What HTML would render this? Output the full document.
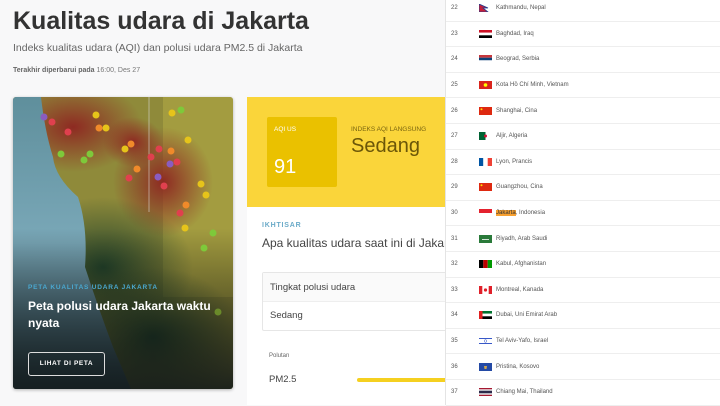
<!DOCTYPE html>
<html><head><meta charset="utf-8"><style>
*{margin:0;padding:0;box-sizing:border-box}
body{width:720px;height:405px;overflow:hidden;background:#f8f8f9;font-family:"Liberation Sans",sans-serif;position:relative}
.h1{position:absolute;left:13px;top:7px;font-size:25px;font-weight:bold;color:#333}
.sub{position:absolute;left:13px;top:42px;font-size:10.5px;color:#666}
.upd{position:absolute;left:13px;top:67px;font-size:7px;color:#777}
.upd b{color:#666}
.map{position:absolute;left:13px;top:97px;width:220px;height:292px;border-radius:3px;overflow:hidden;box-shadow:0 1px 3px rgba(0,0,0,.3)}
.yc{position:absolute;left:247px;top:97px;width:198px;height:110px;background:#fad53a}
.aqi{position:absolute;left:267px;top:117px;width:70px;height:70px;background:#eac100;border-radius:2px;color:#fff}
.wc{position:absolute;left:247px;top:207px;width:198px;height:198px;background:#fff}
.rp{position:absolute;left:445px;top:0;width:275px;height:405px;background:#fff;border-left:1px solid #e4e4e4}
.row{position:absolute;left:0;width:275px;height:25.6px;border-bottom:1px solid #eee;font-size:6px;color:#555}
.row .n{position:absolute;left:5px;top:50%;transform:translateY(-50%)}
.row .f{position:absolute;left:33px;top:50%;margin-top:-4px;width:13px;height:8px}
.row .t{position:absolute;left:50px;top:50%;transform:translateY(-50%)}
</style></head><body>
<div class="h1">Kualitas udara di Jakarta</div>
<div class="sub">Indeks kualitas udara (AQI) dan polusi udara PM2.5 di Jakarta</div>
<div class="upd"><b>Terakhir diperbarui pada</b> 16:00, Des 27</div>

<div class="map">
<svg width="220" height="292" viewBox="0 0 220 292">
<defs>
<radialGradient id="r1" cx="0.5" cy="0.5" r="0.5"><stop offset="0" stop-color="#8e2a22"/><stop offset="1" stop-color="#8e2a22" stop-opacity="0"/></radialGradient>
<radialGradient id="g1" cx="0.5" cy="0.5" r="0.5"><stop offset="0" stop-color="#24452c"/><stop offset="1" stop-color="#24452c" stop-opacity="0"/></radialGradient>
<linearGradient id="dk" x1="0" y1="0" x2="0" y2="1"><stop offset="0.45" stop-color="#000" stop-opacity="0"/><stop offset="1" stop-color="#111819" stop-opacity="0.9"/></linearGradient>
<linearGradient id="wt" x1="0" y1="0" x2="0" y2="1"><stop offset="0" stop-color="#5f8f9c"/><stop offset="0.5" stop-color="#7aa8b8"/><stop offset="1" stop-color="#3c5a66"/></linearGradient>
</defs>
<rect width="220" height="292" fill="#8f8a3a"/>
<rect x="150" y="0" width="70" height="200" fill="#b0a845" opacity=".6"/>
<ellipse cx="60" cy="30" rx="70" ry="45" fill="url(#r1)"/>
<ellipse cx="150" cy="85" rx="50" ry="55" fill="url(#r1)"/>
<ellipse cx="120" cy="45" rx="30" ry="25" fill="url(#r1)"/>
<ellipse cx="90" cy="170" rx="90" ry="70" fill="url(#g1)"/>
<ellipse cx="140" cy="240" rx="90" ry="70" fill="url(#g1)"/>
<path d="M0 0 L28 0 Q32 35 40 60 Q42 80 65 100 Q75 130 72 170 Q85 210 100 250 L118 292 L0 292 Z" fill="url(#wt)"/>
<rect width="220" height="292" fill="url(#dk)"/>
<line x1="136" y1="0" x2="136" y2="115" stroke="#ddd" stroke-width=".8" opacity=".7"/>
<g>
<circle cx="31" cy="20" r="3.5" fill="#8a5cc0"/><circle cx="39" cy="25" r="3.5" fill="#e0404e"/><circle cx="55" cy="35" r="3.5" fill="#e0404e"/>
<circle cx="83" cy="18" r="3.5" fill="#e6c41a"/><circle cx="86" cy="31" r="3.5" fill="#f08a2a"/><circle cx="93" cy="31" r="3.5" fill="#e6c41a"/>
<circle cx="48" cy="57" r="3.5" fill="#7ec93a"/><circle cx="77" cy="57" r="3.5" fill="#7ec93a"/><circle cx="71" cy="63" r="3.5" fill="#7ec93a"/>
<circle cx="112" cy="52" r="3.5" fill="#e6c41a"/><circle cx="118" cy="47" r="3.5" fill="#f08a2a"/><circle cx="124" cy="72" r="3.5" fill="#f08a2a"/>
<circle cx="116" cy="81" r="3.5" fill="#e0404e"/><circle cx="146" cy="52" r="3.5" fill="#e0404e"/><circle cx="158" cy="54" r="3.5" fill="#f08a2a"/>
<circle cx="138" cy="60" r="3.5" fill="#e0404e"/><circle cx="157" cy="67" r="3.5" fill="#8a5cc0"/><circle cx="164" cy="65" r="3.5" fill="#e0404e"/>
<circle cx="145" cy="80" r="3.5" fill="#8a5cc0"/><circle cx="151" cy="89" r="3.5" fill="#e0404e"/><circle cx="175" cy="43" r="3.5" fill="#e6c41a"/>
<circle cx="188" cy="87" r="3.5" fill="#e6c41a"/><circle cx="193" cy="98" r="3.5" fill="#e6c41a"/><circle cx="173" cy="108" r="3.5" fill="#f08a2a"/>
<circle cx="167" cy="116" r="3.5" fill="#e0404e"/><circle cx="172" cy="131" r="3.5" fill="#e6c41a"/><circle cx="200" cy="136" r="3.5" fill="#7ec93a"/>
<circle cx="191" cy="151" r="3.5" fill="#7ec93a"/><circle cx="159" cy="16" r="3.5" fill="#e6c41a"/><circle cx="168" cy="13" r="3.5" fill="#7ec93a"/>
<circle cx="205" cy="215" r="3.5" fill="#6a8a2a"/>
</g>
</svg>
<div style="position:absolute;left:15px;top:187px;font-size:6.5px;font-weight:bold;letter-spacing:.8px;color:#4aa8d0">PETA KUALITAS UDARA JAKARTA</div>
<div style="position:absolute;left:15px;top:201px;width:200px;font-size:12px;font-weight:bold;color:#fff;line-height:17px">Peta polusi udara Jakarta waktu nyata</div>
<div style="position:absolute;left:15px;top:255px;width:77px;height:24px;border:1px solid #ddd;border-radius:3px;color:#fff;font-size:6.5px;font-weight:bold;letter-spacing:.6px;text-align:center;line-height:22px">LIHAT DI PETA</div>
</div>

<div class="yc"><div style="position:absolute;left:104px;top:29px;font-size:6.5px;color:#7a6510">INDEKS AQI LANGSUNG</div>
<div style="position:absolute;left:104px;top:38px;font-size:20px;color:#6b5608">Sedang</div></div>
<div class="aqi"><div style="position:absolute;left:7px;top:9px;font-size:6.5px">AQI US</div><div style="position:absolute;left:7px;top:39px;font-size:20px">91</div></div>

<div class="wc">
<div style="position:absolute;left:15px;top:15px;font-size:7px;font-weight:bold;color:#6aaac8;letter-spacing:.8px">IKHTISAR</div>
<div style="position:absolute;left:15px;top:29px;font-size:12px;color:#444;white-space:nowrap">Apa kualitas udara saat ini di Jakarta?</div>
<div style="position:absolute;left:15px;top:65px;width:200px;height:59px;border:1px solid #e6e6e6;border-radius:2px;background:#fff">
<div style="height:29px;border-bottom:1px solid #eee;background:#fafafa;font-size:9.5px;color:#444;padding:9px 7px">Tingkat polusi udara</div>
<div style="font-size:9.5px;color:#444;padding:8px 7px">Sedang</div></div>
<div style="position:absolute;left:22px;top:146px;font-size:6px;color:#666">Polutan</div>
<div style="position:absolute;left:22px;top:167px;font-size:9.5px;color:#444">PM2.5</div>
<div style="position:absolute;left:110px;top:171px;width:90px;height:4px;border-radius:2px;background:#f5d020"></div>
</div>

<div class="rp">
<div class="row" style="top:-4px"><span class="n">22</span><svg class="f" viewBox="0 0 13 8"><path d="M0 0 L9 4 L4 4 L9 8 L0 8Z" fill="#c41e3a" stroke="#1e3d8f" stroke-width=".8"/></svg><span class="t">Kathmandu, Nepal</span></div>
<div class="row" style="top:21.6px"><span class="n">23</span><svg class="f" viewBox="0 0 13 8"><rect width="13" height="2.7" fill="#ce1126"/><rect y="2.7" width="13" height="2.7" fill="#fff"/><rect y="5.3" width="13" height="2.7" fill="#000"/></svg><span class="t">Baghdad, Iraq</span></div>
<div class="row" style="top:47.2px"><span class="n">24</span><svg class="f" viewBox="0 0 13 8"><rect width="13" height="2.7" fill="#c6363c"/><rect y="2.7" width="13" height="2.7" fill="#0c4076"/><rect y="5.3" width="13" height="2.7" fill="#fff"/></svg><span class="t">Beograd, Serbia</span></div>
<div class="row" style="top:72.8px"><span class="n">25</span><svg class="f" viewBox="0 0 13 8"><rect width="13" height="8" fill="#da251d"/><circle cx="6.5" cy="4" r="1.8" fill="#ff0"/></svg><span class="t">Kota Hồ Chí Minh, Vietnam</span></div>
<div class="row" style="top:98.4px"><span class="n">26</span><svg class="f" viewBox="0 0 13 8"><rect width="13" height="8" fill="#de2910"/><circle cx="2.5" cy="2.3" r="1" fill="#ffde00"/></svg><span class="t">Shanghai, Cina</span></div>
<div class="row" style="top:124px"><span class="n">27</span><svg class="f" viewBox="0 0 13 8"><rect width="6.5" height="8" fill="#006233"/><rect x="6.5" width="6.5" height="8" fill="#fff"/><circle cx="6.5" cy="4" r="1.5" fill="#d21034"/></svg><span class="t">Aljir, Algeria</span></div>
<div class="row" style="top:149.6px"><span class="n">28</span><svg class="f" viewBox="0 0 13 8"><rect width="4.3" height="8" fill="#0055a4"/><rect x="4.3" width="4.4" height="8" fill="#fff"/><rect x="8.7" width="4.3" height="8" fill="#ef4135"/></svg><span class="t">Lyon, Prancis</span></div>
<div class="row" style="top:175.2px"><span class="n">29</span><svg class="f" viewBox="0 0 13 8"><rect width="13" height="8" fill="#de2910"/><circle cx="2.5" cy="2.3" r="1" fill="#ffde00"/></svg><span class="t">Guangzhou, Cina</span></div>
<div class="row" style="top:200.8px"><span class="n">30</span><svg class="f" viewBox="0 0 13 8"><rect width="13" height="4" fill="#e4222e"/><rect y="4" width="13" height="4" fill="#fff"/></svg><span class="t"><span style="background:#f7a030;color:#333">Jakarta</span>, Indonesia</span></div>
<div class="row" style="top:226.4px"><span class="n">31</span><svg class="f" viewBox="0 0 13 8"><rect width="13" height="8" fill="#2a7a3a"/><rect x="3" y="4" width="7" height=".8" fill="#fff"/></svg><span class="t">Riyadh, Arab Saudi</span></div>
<div class="row" style="top:252px"><span class="n">32</span><svg class="f" viewBox="0 0 13 8"><rect width="4.3" height="8" fill="#000"/><rect x="4.3" width="4.4" height="8" fill="#be0000"/><rect x="8.7" width="4.3" height="8" fill="#009900"/></svg><span class="t">Kabul, Afghanistan</span></div>
<div class="row" style="top:277.6px"><span class="n">33</span><svg class="f" viewBox="0 0 13 8"><rect width="13" height="8" fill="#fff"/><rect width="3.3" height="8" fill="#e0202a"/><rect x="9.7" width="3.3" height="8" fill="#e0202a"/><circle cx="6.5" cy="4" r="1.6" fill="#e0202a"/></svg><span class="t">Montreal, Kanada</span></div>
<div class="row" style="top:303.2px"><span class="n">34</span><svg class="f" viewBox="0 0 13 8"><rect width="13" height="2.7" fill="#00732f"/><rect y="2.7" width="13" height="2.7" fill="#fff"/><rect y="5.3" width="13" height="2.7" fill="#000"/><rect width="3.5" height="8" fill="#e02020"/></svg><span class="t">Dubai, Uni Emirat Arab</span></div>
<div class="row" style="top:328.8px"><span class="n">35</span><svg class="f" viewBox="0 0 13 8"><rect width="13" height="8" fill="#fff"/><rect y="1" width="13" height="1" fill="#3858c8"/><rect y="6" width="13" height="1" fill="#3858c8"/><circle cx="6.5" cy="4" r="1.3" fill="none" stroke="#3858c8" stroke-width=".5"/></svg><span class="t">Tel Aviv-Yafo, Israel</span></div>
<div class="row" style="top:354.4px"><span class="n">36</span><svg class="f" viewBox="0 0 13 8"><rect width="13" height="8" fill="#244aa5"/><path d="M5 3 L8 3 L7.5 6 L5.5 6Z" fill="#d0a650"/></svg><span class="t">Pristina, Kosovo</span></div>
<div class="row" style="top:380px"><span class="n">37</span><svg class="f" viewBox="0 0 13 8"><rect width="13" height="8" fill="#a51931"/><rect y="1.3" width="13" height="5.4" fill="#f4f5f8"/><rect y="2.7" width="13" height="2.6" fill="#2d2a4a"/></svg><span class="t">Chiang Mai, Thailand</span></div>
</div>
</body></html>
